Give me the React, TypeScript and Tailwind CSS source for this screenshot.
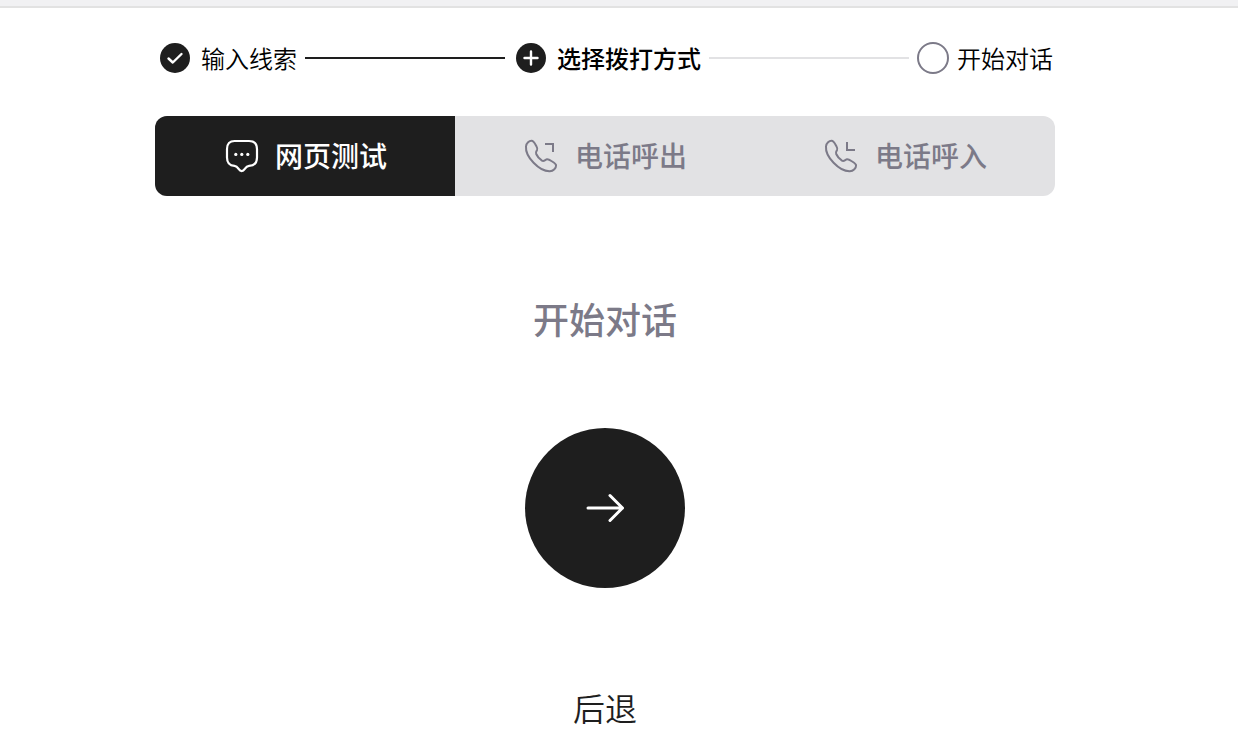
import { useState } from "react";
import type { ReactNode } from "react";

const PHONE =
  "M3 8.5C3.4 5 6.2 2.7 8.6 2.8C10.2 2.9 11.4 4.6 12.7 7C14 9.3 15 10.4 14.1 12C13.2 13.5 12.4 14.2 13.2 16C14.2 18.4 16.6 21 19 22.6C20.6 23.6 21.6 22.4 23.2 21.5C24.8 20.7 26.2 21.5 28.4 23C31 24.6 33 25.6 33.1 27.4C33.2 30 30.4 33 26.8 33.2C21.8 33.4 15.2 29.6 10.6 24.8C6 20 2.5 14 3 8.5Z";

function ChatIcon() {
  return (
    <svg viewBox="0 0 36 36" className="size-9" fill="none" aria-hidden="true">
      <path
        d="M11.5 3H26C31 3 34 6 34 11V19.5C34 24.5 31 27.6 26 27.8C23.6 27.9 23 29 21.6 31.2C20 33.8 17.4 33.8 15.8 31.2C14.4 29 13.8 27.9 11.5 27.8C6.6 27.6 4 24.5 4 19.5V11C4 6 6.8 3 11.5 3Z"
        stroke="currentColor"
        strokeWidth="2.2"
        strokeLinejoin="round"
      />
      <circle cx="12.8" cy="16.4" r="1.6" fill="currentColor" />
      <circle cx="18.8" cy="16.4" r="1.6" fill="currentColor" />
      <circle cx="24.8" cy="16.4" r="1.6" fill="currentColor" />
    </svg>
  );
}

function PhoneIcon({ mark }: { mark: string }) {
  return (
    <svg viewBox="0 0 36 36" className="size-9" fill="none" stroke="currentColor" strokeWidth="2" aria-hidden="true">
      <path d={PHONE} strokeLinejoin="round" />
      <path d={mark} />
    </svg>
  );
}

function StepIcon({ d }: { d: string }) {
  return (
    <svg viewBox="0 0 36 36" className="size-9 shrink-0" fill="none" aria-hidden="true">
      <circle cx="18" cy="18" r="15" fill="#1e1e1e" />
      <path d={d} stroke="white" strokeWidth="2.4" strokeLinecap="round" strokeLinejoin="round" />
    </svg>
  );
}

const tabs: { label: string; icon: ReactNode }[] = [
  { label: "网页测试", icon: <ChatIcon /> },
  { label: "电话呼出", icon: <PhoneIcon mark="M22 6H30V14" /> },
  { label: "电话呼入", icon: <PhoneIcon mark="M24 4V12H32" /> },
];

export default function App() {
  const [active, setActive] = useState(0);
  return (
    <div className="min-h-screen bg-white font-['Noto_Sans_CJK_SC',sans-serif] text-[#1e1e1e]">
      <header className="h-2 border-b-2 border-[#e2e2e2] bg-[#f1f1f3]" />
      <main className="pr-7">
        <div className="mx-auto flex max-w-[900px] flex-col items-center pt-8">
          <ol className="flex w-full items-center justify-center gap-2 text-2xl leading-9 whitespace-nowrap text-black">
            <li className="flex items-center gap-2 font-[350]">
              <StepIcon d="M11.5 18.5L15.8 22.5L24.5 14" />
              <span>输入线索</span>
            </li>
            <li aria-hidden="true" className="h-0.5 max-w-[200px] flex-1 bg-[#1e1e1e]" />
            <li aria-current="step" className="flex items-center gap-2 font-medium">
              <StepIcon d="M11.5 18H24.5M18 11.5V24.5" />
              <span>选择拨打方式</span>
            </li>
            <li aria-hidden="true" className="h-0.5 max-w-[200px] flex-1 bg-[#e2e2e4]" />
            <li className="flex items-center gap-2 font-[350]">
              <span className="size-8 shrink-0 rounded-full border-2 border-[#7c7a88]" />
              <span>开始对话</span>
            </li>
          </ol>

          <div role="tablist" className="mt-10 grid w-full grid-cols-3 overflow-hidden rounded-xl bg-[#e2e2e4]">
            {tabs.map((tab, i) => (
              <button
                key={tab.label}
                type="button"
                role="tab"
                aria-selected={active === i}
                onClick={() => setActive(i)}
                className={
                  active === i
                    ? "flex h-20 items-center justify-center gap-4 bg-[#1e1e1e] text-[28px] font-medium text-white"
                    : "flex h-20 items-center justify-center gap-4 text-[28px] font-medium text-[#7c7a88]"
                }
              >
                {tab.icon}
                <span className="pb-0.5">{tab.label}</span>
              </button>
            ))}
          </div>

          <h1 className="mt-24 text-4xl leading-[52px] font-medium text-[#7c7a88]">开始对话</h1>

          <button
            type="button"
            aria-label="开始对话"
            className="mt-[84px] flex size-40 items-center justify-center rounded-full bg-[#1e1e1e] text-white"
          >
            <svg
              viewBox="0 0 40 40"
              className="size-10"
              fill="none"
              stroke="currentColor"
              strokeWidth="3"
              strokeLinecap="round"
              strokeLinejoin="round"
              aria-hidden="true"
            >
              <path d="M3 20H37.5M25 7.5L37.5 20L25 32.5" />
            </svg>
          </button>

          <button type="button" className="mt-24 text-[32px] leading-[46px] font-[350]">
            后退
          </button>
        </div>
      </main>
    </div>
  );
}
